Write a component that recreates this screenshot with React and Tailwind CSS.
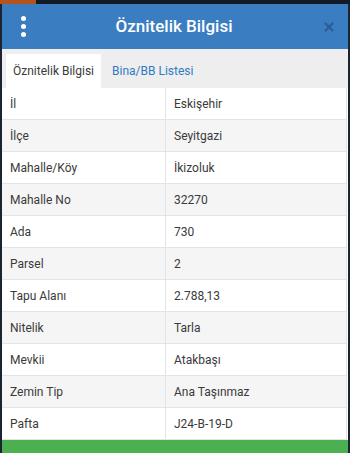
import React from "react";
import { X } from "lucide-react";

const rows = [
  ["İl", "Eskişehir"],
  ["İlçe", "Seyitgazi"],
  ["Mahalle/Köy", "İkizoluk"],
  ["Mahalle No", "32270"],
  ["Ada", "730"],
  ["Parsel", "2"],
  ["Tapu Alanı", "2.788,13"],
  ["Nitelik", "Tarla"],
  ["Mevkii", "Atakbaşı"],
  ["Zemin Tip", "Ana Taşınmaz"],
  ["Pafta", "J24-B-19-D"],
];

export default function App() {
  return (
    <div className="w-[350px] h-[453px] overflow-hidden bg-[#1b2430] flex flex-col font-['Roboto',sans-serif]">
      {/* top strip behind the dialog */}
      <div className="h-[4px] flex shrink-0">
        <div className="w-[36px] bg-[#b5531f]" />
        <div className="flex-1 bg-[#121a26]" />
      </div>

      <div className="flex-1 flex flex-col ml-[2px] mr-[2px] bg-white">
        {/* header */}
        <div className="h-[45px] bg-[#3a7dc1] flex items-center justify-between pl-[19px] pr-[12px] shrink-0">
          <div className="flex flex-col gap-[3px]">
            <span className="w-[5px] h-[5px] rounded-full bg-white" />
            <span className="w-[5px] h-[5px] rounded-full bg-white" />
            <span className="w-[5px] h-[5px] rounded-full bg-white" />
          </div>
          <div className="text-white text-[17px] font-medium">Öznitelik Bilgisi</div>
          <X size={14} strokeWidth={4} className="text-[#2c5f96]" />
        </div>

        {/* tabs */}
        <div className="h-[39px] bg-[#eeeeee] flex items-end px-[4px] shrink-0">
          <div className="h-[34px] px-[7px] bg-white flex items-center text-[12px] text-[#3a3a3a]">
            Öznitelik Bilgisi
          </div>
          <div className="h-[34px] px-[11px] flex items-center text-[12px] text-[#2f7bc4]">
            Bina/BB Listesi
          </div>
        </div>

        {/* table */}
        <div className="flex flex-col border-r border-[#e2e2e2] mr-[1px]">
          {rows.map(([k, v], i) => (
            <div
              key={k}
              className={`h-[32px] flex items-center text-[12px] text-[#3a3a3a] border-b border-[#e4e4e4] ${
                i % 2 === 1 ? "bg-[#f5f5f5]" : "bg-white"
              }`}
            >
              <div className="w-[164px] h-full flex items-center pl-[8px] border-r border-[#e4e4e4]">{k}</div>
              <div className="flex-1 pl-[8px]">{v}</div>
            </div>
          ))}
        </div>

        <div className="flex-1 bg-[#4caf50]" />
      </div>
    </div>
  );
}
